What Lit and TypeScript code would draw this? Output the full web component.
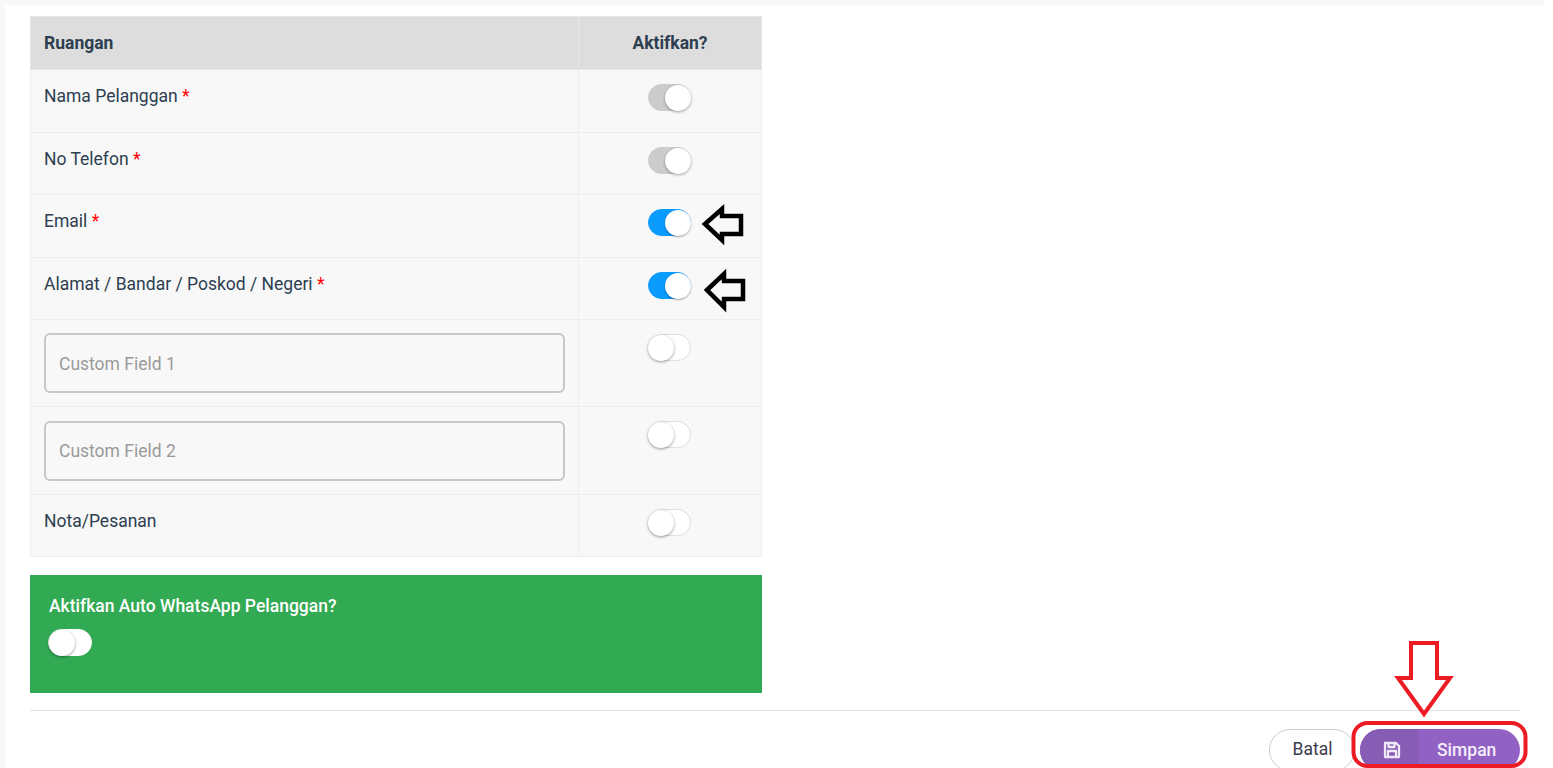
import { LitElement, html, css, svg } from "lit";
import { customElement } from "lit/decorators.js";

const rows = [
  { label: "Nama Pelanggan", req: true, state: "locked" },
  { label: "No Telefon", req: true, state: "locked" },
  { label: "Email", req: true, state: "on" },
  { label: "Alamat / Bandar / Poskod / Negeri", req: true, state: "on" },
  { input: "Custom Field 1", state: "off" },
  { input: "Custom Field 2", state: "off" },
  { label: "Nota/Pesanan", state: "off" },
];

@customElement("app-root")
export class AppRoot extends LitElement {
  static styles = css`
    :host { display: block; height: 768px; overflow: hidden; background: #fff; font-family: Roboto, sans-serif; color: #2c3e50; position: relative; }
    .frame { width: 1544px; height: 768px; box-sizing: border-box; padding: 5px 0 0 5px; background: #f8f8f8; }
    .card { background: #fff; padding: 11px 24px 0 25px; height: 763px; box-sizing: border-box; }
    table { width: 731px; border-collapse: collapse; table-layout: fixed; font-size: 17.5px; }
    th, td { border: 1px solid #eeeeee; background: #f8f8f8; box-sizing: border-box; padding: 0; }
    th { background: #dddddd; height: 53px; font-weight: 700; text-align: center; border-color: #e8e8e8; }
    th:first-child { text-align: left; padding-left: 13px; }
    td { vertical-align: top; padding: 13px 13px 0; line-height: 26px; }
    td.c { padding: 13px 2px 0 0; }
    .r0 { height: 63px; } .r1 { height: 62px; } .r2 { height: 63px; } .r3 { height: 62px; }
    .r4 { height: 87px; } .r5 { height: 88px; } .r6 { height: 62px; }
    .star { color: #f00; }
    .field { width: 521px; height: 60px; box-sizing: border-box; border: 2px solid #c8c8c8; border-radius: 6px; padding: 0 13px; display: flex; align-items: center; color: #9a9a9a; background: #f8f8f8; }
    .r4 .field { padding-top: 2px; }
    .r5 .field { margin-top: 1px; }
    .sw { display: block; width: 43px; height: 27px; box-sizing: border-box; border-radius: 14px; margin: 1px auto 0; position: relative; border: 1px solid #dfdfdf; background: #fff; }
    .sw::after { content: ""; position: absolute; width: 26px; height: 26px; border-radius: 50%; background: #fff; top: -0.5px; left: -0.5px; box-shadow: 0 1px 3px rgba(0,0,0,.4); }
    .sw.on { background: #0a9bff; border-color: #0a9bff; }
    .sw.on::after { left: 16px; box-shadow: 0 1px 2px rgba(0,0,0,.35); }
    .sw.locked { background: #cccccc; border-color: #cccccc; }
    .sw.locked::after { left: 16px; box-shadow: 0 1px 3px rgba(0,0,0,.35); }
    .wa { width: 732px; height: 118px; margin-top: 18px; background: #32a953; color: #fff; padding: 20px 19px 0 19px; box-sizing: border-box; font-weight: 500; font-size: 17.5px; line-height: 22px; }
    .wa .sw { width: 44px; margin: 12px 0 0 -1px; border-color: #fff; }
    hr { border: 0; border-top: 1px solid #e4e4e4; margin: 17px 0 0; }
    .foot { display: flex; justify-content: flex-end; gap: 5px; margin-top: 18px; font-size: 17.5px; }
    .batal { width: 86px; height: 42px; box-sizing: border-box; border: 1px solid #cccccc; border-radius: 21px; display: flex; align-items: center; justify-content: center; background: #fff; color: #3a3a4a; padding: 0 0 2px 1px; }
    .simpan { width: 160px; height: 42px; border-radius: 21px; display: flex; overflow: hidden; background: #9261c4; color: #f4eefa; font-weight: 500; }
    .simpan .ic { width: 58px; background: #875cb5; display: flex; align-items: center; justify-content: center; padding: 0 0 1px 5px; box-sizing: border-box; }
    .simpan .t { flex: 1; display: flex; align-items: center; padding-left: 19px; }
    .ann { position: absolute; left: 0; top: 0; pointer-events: none; }
  `;

  render() {
    return html`
      <div class="frame">
        <div class="card">
          <table>
            <colgroup><col style="width:548px" /><col style="width:183px" /></colgroup>
            <thead><tr><th>Ruangan</th><th>Aktifkan?</th></tr></thead>
            <tbody>
              ${rows.map((r, i) => html`
                <tr class="r${i}">
                  <td>${r.input
                    ? html`<div class="field">${r.input}</div>`
                    : html`${r.label}${r.req ? html` <span class="star">*</span>` : ""}`}</td>
                  <td class="c"><span class="sw ${r.state}"></span></td>
                </tr>`)}
            </tbody>
          </table>
          <div class="wa">
            Aktifkan Auto WhatsApp Pelanggan?
            <span class="sw"></span>
          </div>
          <hr />
          <div class="foot">
            <div class="batal">Batal</div>
            <div class="simpan">
              <div class="ic">
                <svg width="18" height="18" viewBox="0 0 18 18" fill="none" stroke="#efe8f7" stroke-width="2.3" stroke-linejoin="round">
                  <path d="M2 2h11l3 3v11H2z" />
                  <path d="M5.5 2v4h6V2" />
                  <path d="M5 16v-6h8v6" />
                </svg>
              </div>
              <div class="t">Simpan</div>
            </div>
          </div>
        </div>
      </div>
      <svg class="ann" width="1553" height="768" fill="none" stroke-linejoin="miter">
        ${svg`
          <path d="M705 224 L722 209 V216 H741 V234 H722 V240 Z" stroke="#000" stroke-width="4.5" />
          <path d="M707 290 L724 274 V281 H743 V299 H724 V307 Z" stroke="#000" stroke-width="4.5" />
          <path d="M1411 643 H1437 V678 H1450 L1424 714 L1398 678 H1411 Z" stroke="#ed1c24" stroke-width="4" />
          <rect x="1353.5" y="723" width="172" height="43" rx="14" stroke="#ed1c24" stroke-width="4" />
        `}
      </svg>
    `;
  }
}
